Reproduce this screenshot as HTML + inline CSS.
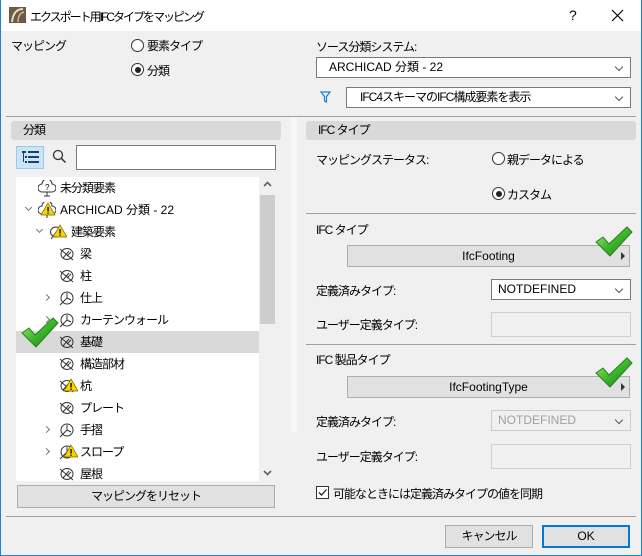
<!DOCTYPE html>
<html><head><meta charset="utf-8"><style>
*{box-sizing:border-box;margin:0;padding:0}
body{width:642px;height:556px;overflow:hidden;background:#f0f0f0;font-family:"Liberation Sans","Noto Sans CJK JP",sans-serif;font-size:12px;color:#000;position:relative;letter-spacing:-1px}
.l{letter-spacing:0}
.a{position:absolute;white-space:nowrap}
.win{position:absolute;left:0;top:0;width:642px;height:556px;border:1px solid #1883d7;border-top:none}
.title{position:absolute;left:0;top:0;width:642px;height:31px;background:#fff}
.sep{position:absolute;height:1px;background:#a0a0a0}
.hdr{position:absolute;background:#d9d9d9;border-radius:3px;height:19px;line-height:19px;padding-left:12px}
.dd{position:absolute;background:#fff;border:1px solid #7a7a7a;height:21px;line-height:19px;padding-left:12px}
.dd:after{content:"";position:absolute;right:8px;top:6px;width:5px;height:5px;border-right:1px solid #555;border-bottom:1px solid #555;transform:rotate(45deg)}
.rad{position:absolute;width:13px;height:13px;border:1px solid #333;border-radius:50%;background:#fff}
.rad.on:after{content:"";position:absolute;left:2.5px;top:2.5px;width:6px;height:6px;border-radius:50%;background:#222}
.btn{position:absolute;background:#e1e1e1;border:1px solid #adadad;text-align:center;line-height:20px}
.btn.ar:after{content:"";position:absolute;right:4px;top:6px;border-left:4px solid #333;border-top:4px solid transparent;border-bottom:4px solid transparent}
.fld{position:absolute;background:#f0f0f0;border:1px solid #cfcfcf}
.row{position:absolute;left:16px;width:243px;height:22px;line-height:22px}
.ic{position:absolute;top:3px}
.chev{position:absolute;top:8px;width:5px;height:5px;border-right:1.5px solid #777;border-bottom:1.5px solid #777}
</style></head><body>
<div class="title"></div>
<svg class="a" style="left:9px;top:7px" width="17" height="16"><rect width="17" height="16" fill="#6b5a45"/><path d="M3 15 C4 6 8 2 14 2" stroke="#e8d9b5" stroke-width="2" fill="none"/><path d="M9 15 C9 9 11 6 15 5" stroke="#c9b48f" stroke-width="1.5" fill="none"/></svg>
<div class="a" style="left:30px;top:8px;letter-spacing:-2px">エクスポート用IFCタイプをマッピング</div>
<div class="a" style="left:569px;top:7px;font-size:14px">?</div>
<svg class="a" style="left:611px;top:9px" width="13" height="13"><path d="M1 1L12 12M12 1L1 12" stroke="#000" stroke-width="1.2"/></svg>
<div class="win"></div>

<div class="a" style="left:11px;top:37px">マッピング</div>
<div class="rad" style="left:131px;top:39px"></div><div class="a" style="left:147px;top:37px">要素タイプ</div>
<div class="rad on" style="left:131px;top:63px"></div><div class="a" style="left:147px;top:62px">分類</div>
<div class="a" style="left:316px;top:38px">ソース分類システム:</div>
<div class="dd l" style="left:316px;top:57px;width:315px">ARCHICAD 分類 - 22</div>
<svg class="a" style="left:320px;top:91px" width="11" height="12"><path d="M1 1H10L6.5 5.5V11L4.5 10V5.5Z" fill="none" stroke="#1a7fd4" stroke-width="1.2"/></svg>
<div class="dd" style="left:346px;top:87px;width:285px;padding-left:13px">IFC4スキーマのIFC構成要素を表示</div>
<div class="sep" style="left:6px;top:116px;width:630px"></div>

<div class="a" style="left:291px;top:117px;width:6px;height:315px;background:#f7f7f7"></div>
<div class="hdr" style="left:11px;top:121px;width:270px">分類</div>
<div class="a" style="left:16px;top:146px;width:28px;height:23px;background:#cce4f7;border:1px solid #99c9ef"></div>
<svg class="a" style="left:22px;top:151px" width="17" height="13"><g fill="#1e3f66"><rect x="0" y="0" width="4" height="2"/><rect x="6" y="0" width="11" height="2"/><rect x="3" y="5" width="2" height="2"/><rect x="6" y="5" width="11" height="2"/><rect x="3" y="10" width="2" height="2"/><rect x="6" y="10" width="11" height="2"/><rect x="1" y="2" width="1" height="9"/></g></svg>
<svg class="a" style="left:52px;top:149px" width="15" height="15"><circle cx="6" cy="6" r="4.5" fill="none" stroke="#333" stroke-width="1.3"/><path d="M9.5 9.5L13.5 13.5" stroke="#333" stroke-width="1.5"/></svg>
<div class="a" style="left:76px;top:145px;width:200px;height:25px;background:#fff;border:1px solid #7a7a7a"></div>

<div class="a" style="left:16px;top:177px;width:243px;height:304px;background:#fff"></div>
<svg width="0" height="0" style="position:absolute"><defs><g id="lf"><ellipse cx="9" cy="8" rx="6" ry="5.5" fill="none" stroke="#333"/><path d="M2 3L15 14M5 12L11 5M9 10L13 6" stroke="#333" fill="none"/></g><g id="lf2"><circle cx="9" cy="8" r="6" fill="none" stroke="#333"/><path d="M2 15L9 8V3M9 8L13 10" stroke="#333" fill="none"/></g></defs></svg>
<div class="a" style="left:16px;top:331px;width:243px;height:22px;background:#d9d9d9"></div>
<div class="a" style="left:16px;top:177px;width:243px;height:304px;overflow:hidden">
<div class="row" style="left:0;top:0"><svg class="ic" style="left:22px" width="18" height="17"><path d="M4 12 A4 4 0 0 1 4 4 A5 5 0 0 1 14 4 A4 4 0 0 1 14 12Z M9 12V16 M6 16H12" fill="none" stroke="#333"/><text x="7" y="10" font-size="8" font-family="Liberation Sans">?</text></svg><span class="a" style="left:44px">未分類要素</span></div>
<div class="row l" style="left:0;top:22px"><div class="chev" style="left:10px;top:6px;transform:rotate(45deg)"></div><svg class="ic" style="left:22px" width="18" height="17"><path d="M4 12 A4 4 0 0 1 4 4 A5 5 0 0 1 14 4 A4 4 0 0 1 14 12Z M9 12V16" fill="none" stroke="#333"/><path d="M10 1L17 13H3Z" fill="#f5d400" stroke="#7a6200" stroke-width=".7"/><rect x="9.4" y="5" width="1.3" height="4.5" fill="#000"/><rect x="9.4" y="10.5" width="1.3" height="1.3" fill="#000"/></svg><span class="a" style="left:44px">ARCHICAD 分類 - 22</span></div>
<div class="row" style="left:0;top:44px"><div class="chev" style="left:21px;top:6px;transform:rotate(45deg)"></div><svg class="ic" style="left:33px" width="18" height="17"><ellipse cx="7" cy="8" rx="5.5" ry="5" fill="none" stroke="#333"/><path d="M2 15L8 7" stroke="#333"/><path d="M11 1L18 13H4Z" fill="#f5d400" stroke="#7a6200" stroke-width=".7"/><rect x="10.4" y="5" width="1.3" height="4.5" fill="#000"/><rect x="10.4" y="10.5" width="1.3" height="1.3" fill="#000"/></svg><span class="a" style="left:55px">建築要素</span></div>
<div class="row" style="left:0;top:66px"><svg class="ic" style="left:42px" width="18" height="17"><use href="#lf"/></svg><span class="a" style="left:64px">梁</span></div>
<div class="row" style="left:0;top:88px"><svg class="ic" style="left:42px" width="18" height="17"><use href="#lf"/></svg><span class="a" style="left:64px">柱</span></div>
<div class="row" style="left:0;top:110px"><div class="chev" style="left:28px;top:8px;transform:rotate(-45deg)"></div><svg class="ic" style="left:42px" width="18" height="17"><use href="#lf2"/></svg><span class="a" style="left:64px">仕上</span></div>
<div class="row" style="left:0;top:132px"><div class="chev" style="left:28px;top:8px;transform:rotate(-45deg)"></div><svg class="ic" style="left:42px" width="18" height="17"><use href="#lf2"/></svg><span class="a" style="left:64px">カーテンウォール</span></div>
<div class="row" style="left:0;top:154px"><svg class="ic" style="left:42px" width="18" height="17"><use href="#lf"/></svg><span class="a" style="left:64px">基礎</span></div>
<div class="row" style="left:0;top:176px"><svg class="ic" style="left:42px" width="18" height="17"><use href="#lf"/></svg><span class="a" style="left:64px">構造部材</span></div>
<div class="row" style="left:0;top:198px"><svg class="ic" style="left:42px" width="20" height="17"><use href="#lf"/><path d="M13 1L20 13H6Z" fill="#f5d400" stroke="#7a6200" stroke-width=".7"/><rect x="12.4" y="5" width="1.3" height="4.5"/><rect x="12.4" y="10.5" width="1.3" height="1.3"/></svg><span class="a" style="left:64px">杭</span></div>
<div class="row" style="left:0;top:220px"><svg class="ic" style="left:42px" width="18" height="17"><use href="#lf"/></svg><span class="a" style="left:64px">プレート</span></div>
<div class="row" style="left:0;top:242px"><div class="chev" style="left:28px;top:8px;transform:rotate(-45deg)"></div><svg class="ic" style="left:42px" width="18" height="17"><use href="#lf2"/></svg><span class="a" style="left:64px">手摺</span></div>
<div class="row" style="left:0;top:264px"><div class="chev" style="left:28px;top:8px;transform:rotate(-45deg)"></div><svg class="ic" style="left:42px" width="20" height="17"><use href="#lf2"/><path d="M13 1L20 13H6Z" fill="#f5d400" stroke="#7a6200" stroke-width=".7"/><rect x="12.4" y="5" width="1.3" height="4.5"/><rect x="12.4" y="10.5" width="1.3" height="1.3"/></svg><span class="a" style="left:64px">スロープ</span></div>
<div class="row" style="left:0;top:286px"><svg class="ic" style="left:42px" width="18" height="17"><use href="#lf"/></svg><span class="a" style="left:64px">屋根</span></div>
</div>
<div class="a" style="left:259px;top:177px;width:17px;height:304px;background:#f0f0f0"></div>
<div class="a" style="left:260px;top:195px;width:15px;height:129px;background:#cdcdcd"></div>
<svg class="a" style="left:263px;top:181px" width="9" height="6"><path d="M1 5L4.5 1.5L8 5" stroke="#606060" stroke-width="1.6" fill="none"/></svg>
<svg class="a" style="left:263px;top:470px" width="9" height="6"><path d="M1 1L4.5 4.5L8 1" stroke="#606060" stroke-width="1.6" fill="none"/></svg>
<div class="btn" style="left:17px;top:485px;width:258px;height:23px">マッピングをリセット</div>
<div class="sep" style="left:6px;top:516px;width:630px"></div>

<div class="hdr" style="left:306px;top:121px;width:330px">IFC タイプ</div>
<div class="a" style="left:316px;top:151px">マッピングステータス:</div>
<div class="rad" style="left:492px;top:152px"></div><div class="a" style="left:507px;top:151px">親データによる</div>
<div class="rad on" style="left:492px;top:187px"></div><div class="a" style="left:507px;top:186px">カスタム</div>
<div class="sep" style="left:306px;top:213px;width:330px"></div>
<div class="a" style="left:316px;top:221px">IFC タイプ</div>
<div class="btn ar l" style="left:347px;top:245px;width:283px;height:22px">IfcFooting</div>
<div class="a" style="left:316px;top:282px">定義済みタイプ:</div>
<div class="dd l" style="left:491px;top:279px;width:140px;padding-left:6px">NOTDEFINED</div>
<div class="a" style="left:316px;top:316px">ユーザー定義タイプ:</div>
<div class="fld" style="left:491px;top:312px;width:140px;height:25px"></div>
<div class="sep" style="left:306px;top:344px;width:330px"></div>
<div class="a" style="left:316px;top:351px">IFC 製品タイプ</div>
<div class="btn ar l" style="left:347px;top:376px;width:283px;height:22px">IfcFootingType</div>
<div class="a" style="left:316px;top:413px">定義済みタイプ:</div>
<div class="dd l" style="left:491px;top:410px;width:140px;padding-left:6px;border-color:#ccc;color:#a0a0a0;background:#f0f0f0">NOTDEFINED</div>
<div class="a" style="left:316px;top:448px">ユーザー定義タイプ:</div>
<div class="fld" style="left:491px;top:444px;width:140px;height:25px"></div>
<div class="a" style="left:316px;top:486px;width:13px;height:13px;border:1px solid #333;background:#fff"></div>
<svg class="a" style="left:317px;top:487px" width="11" height="11"><path d="M2 5.5L4.5 8L9.5 2.5" stroke="#222" stroke-width="1.3" fill="none"/></svg>
<div class="a" style="left:333px;top:485px">可能なときには定義済みタイプの値を同期</div>

<div class="btn" style="left:445px;top:525px;width:88px;height:23px">キャンセル</div>
<div class="btn l" style="left:542px;top:525px;width:88px;height:23px;border:2px solid #0078d7;line-height:19px">OK</div>

<svg width="0" height="0" style="position:absolute"><defs><linearGradient id="g" x1="0" y1="0" x2="1" y2="1"><stop offset="0" stop-color="#a6f07a"/><stop offset=".5" stop-color="#3bb82a"/><stop offset="1" stop-color="#1c7a14"/></linearGradient><g id="ck"><path d="M2 17L9 12L15 19L33 2L38 7L16 31Z" fill="url(#g)" stroke="#2f7d22" stroke-width="1"/></g></defs></svg>
<svg class="a" style="left:20px;top:316px" width="40" height="34"><use href="#ck"/></svg>
<svg class="a" style="left:594px;top:225px" width="40" height="34"><use href="#ck"/></svg>
<svg class="a" style="left:594px;top:356px" width="40" height="34"><use href="#ck"/></svg>
</body></html>
